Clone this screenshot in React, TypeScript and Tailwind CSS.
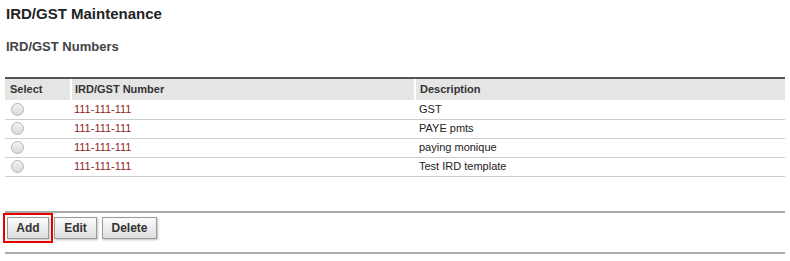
const rows = [
  { number: '111-111-111', description: 'GST' },
  { number: '111-111-111', description: 'PAYE pmts' },
  { number: '111-111-111', description: 'paying monique' },
  { number: '111-111-111', description: 'Test IRD template' },
];

const Radio = () => (
  <span className="inline-block w-[13px] h-[13px] rounded-full border border-[#b5b5b5] bg-gradient-to-b from-[#f4f4f4] to-[#d9d9d9] align-middle" />
);

const Btn = ({ label, width, active }: { label: string; width: string; active?: boolean }) => (
  <button
    className={`${width} h-[22px] border border-[#9a9a9a] rounded-none bg-gradient-to-b from-[#fbfbfb] to-[#dedede] shadow-[1px_1px_2px_rgba(0,0,0,0.25)] text-[12px] font-bold text-[#333] leading-none ${
      active ? 'outline-2 outline-[#e60000] outline-offset-[2px]' : ''
    }`}
  >
    {label}
  </button>
);

export default function App() {
  return (
    <div className="w-[790px] h-[261px] bg-white px-[5px] pt-[5px] font-['Liberation_Sans',Arial,sans-serif]">
      <h1 className="ml-[1px] text-[15px] font-bold text-[#222] leading-[18px]">IRD/GST Maintenance</h1>
      <h2 className="ml-[1px] mt-[16px] text-[13px] font-bold text-[#444] leading-[16px]">IRD/GST Numbers</h2>

      <table className="mt-[22px] w-[780px] border-collapse border-t-2 border-[#555] text-[11px]">
        <thead>
          <tr className="bg-[#e5e5e5] h-[22px] text-left text-[#333]">
            <th className="w-[67px] pl-[5px] font-bold shadow-[inset_-2px_0_0_#fff]">Select</th>
            <th className="w-[344px] pl-[3px] font-bold shadow-[inset_-2px_0_0_#fff]">IRD/GST Number</th>
            <th className="pl-[4px] font-bold">Description</th>
          </tr>
        </thead>
        <tbody>
          {rows.map((r, i) => (
            <tr key={i} className="h-[19px] border-b border-[#cfcfcf]">
              <td className="pl-[6px] leading-none">
                <Radio />
              </td>
              <td className="pl-[2px] text-[#8f1d1d]">{r.number}</td>
              <td className="pl-[3px] text-[#222]">{r.description}</td>
            </tr>
          ))}
        </tbody>
      </table>

      <div className="mt-[34px] w-[780px] border-t-2 border-[#aaa]">
        <div className="flex items-start gap-[5px] pl-[2px] pt-[4px] h-[39px]">
          <Btn label="Add" width="w-[42px]" active />
          <Btn label="Edit" width="w-[43px]" />
          <Btn label="Delete" width="w-[55px]" />
        </div>
      </div>
      <div className="w-[780px] border-t-2 border-[#aaa]" />
    </div>
  );
}
